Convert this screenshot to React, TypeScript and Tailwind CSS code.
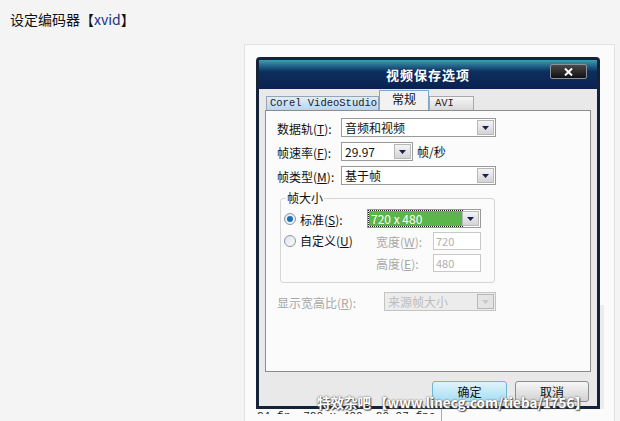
import React from 'react';

const cjk = {fontFamily: '"Noto Sans CJK SC", "Liberation Sans", sans-serif'};
const mono = {fontFamily: '"Liberation Mono", monospace'};

function Arrow({disabled}: {disabled?: boolean}) {
  return (
    <div
      className={`flex h-full w-[17px] items-center justify-center border border-[#b8b8b8] ${
        disabled ? 'bg-[#e4e4e4]' : 'bg-gradient-to-b from-[#f4f4f4] to-[#d4d4d4]'
      }`}
    >
      <svg width="7" height="4" viewBox="0 0 7 4">
        <path d="M0 0h7L3.5 4z" fill={disabled ? '#c8c8c8' : '#15205a'} />
      </svg>
    </div>
  );
}

function Select({
  value,
  width,
  highlight,
  disabled,
}: {
  value: string;
  width: string;
  highlight?: boolean;
  disabled?: boolean;
}) {
  return (
    <div
      className={`flex h-[19px] items-stretch border p-px ${width} ${
        disabled ? 'border-[#c4c4c4] bg-[#ececec]' : 'border-[#9a9a9a] bg-white'
      }`}
    >
      <div
        className={`flex flex-1 items-center pl-[2px] text-[12px] leading-none ${
          highlight ? 'bg-[#5ab54a] text-white outline-1 outline-dotted outline-[#1a1a1a]' : ''
        } ${disabled ? 'text-[#bdbdbd]' : highlight ? '' : 'text-[#111]'}`}
      >
        {value}
      </div>
      <Arrow disabled={disabled} />
    </div>
  );
}

function Label({text, k, gray}: {text: string; k: string; gray?: boolean}) {
  return (
    <span className={`text-[12px] leading-[14px] ${gray ? 'text-[#a8a8a8]' : 'text-[#111]'}`}>
      {text}(<span className="underline">{k}</span>):
    </span>
  );
}

function Radio({checked}: {checked?: boolean}) {
  return (
    <div className="flex h-[12px] w-[12px] shrink-0 items-center justify-center rounded-full border border-[#8a96a6] bg-gradient-to-br from-[#dfe4ea] to-[#fafafa]">
      {checked && <div className="h-[6px] w-[6px] rounded-full bg-[#1f6fb8]" />}
    </div>
  );
}

export default function App() {
  return (
    <div className="h-[421px] w-[620px] overflow-hidden bg-[#f4f4f4]" style={cjk}>
      <div className="pl-[10px] pt-[9px] text-[14px] leading-[20px] text-[#111]">
        设定编码器【<span className="text-[#1c2f86]">xvid</span>】
      </div>

      <div className="ml-[244px] mt-[15px] h-[400px] w-[371px] border border-[#e2e2e2] bg-[#fbfbfb] pl-[11px] pt-[12px]">
        <div className="flex">
          {/* dialog */}
          <div className="flex h-[352px] w-[344px] flex-col rounded-t-[4px] border-[3px] border-[#152338] bg-[#e9e9e9]">
            {/* title bar */}
            <div className="relative flex h-[29px] items-center justify-center bg-gradient-to-b from-[#3e9fb6] via-[#0e2f5e] via-40% to-[#0a2150]">
              <span className="text-[13px] font-bold tracking-[1px] text-white">视频保存选项</span>
              <div className="absolute right-[10px] top-[4px] flex h-[15px] w-[37px] items-center justify-center rounded-[2px] border border-[#8a9098] bg-gradient-to-b from-[#4a4a4a] to-[#111]">
                <svg width="9" height="8" viewBox="0 0 9 8">
                  <path d="M1 0.5L8 7.5M8 0.5L1 7.5" stroke="#fff" strokeWidth="2" />
                </svg>
              </div>
            </div>

            {/* body */}
            <div className="flex flex-1 flex-col px-[6px] pt-[1px]">
              {/* tabs */}
              <div className="flex h-[20px] items-end pl-[1px]">
                <div
                  className="flex h-[14px] w-[113px] items-center whitespace-nowrap border border-b-0 border-[#9aa4ae] bg-gradient-to-b from-[#dfeefa] to-[#b9d6ef] pl-[3px] text-[10.5px] leading-none text-[#222]"
                  style={mono}
                >
                  Corel VideoStudio
                </div>
                <div className="flex h-[20px] w-[50px] items-start justify-center border border-b-0 border-[#7fa6c6] bg-[#f2f2f2] pt-[1px] text-[12px] leading-[14px] text-[#111]">
                  常规
                </div>
                <div
                  className="flex h-[14px] w-[45px] items-center border border-b-0 border-[#a8a8a8] bg-gradient-to-b from-[#f6f6f6] to-[#d9d9d9] pl-[5px] text-[10.5px] leading-none text-[#222]"
                  style={mono}
                >
                  AVI
                </div>
              </div>

              {/* tab panel */}
              <div className="flex h-[262px] w-[326px] flex-col border border-[#8c8c8c] bg-[#fbfbfb] pl-[11px] pt-[7px] leading-[14px]">
                <div className="flex items-center gap-[1px]">
                  <div className="w-[63px]">
                    <Label text="数据轨" k="T" />
                  </div>
                  <Select value="音频和视频" width="w-[155px]" />
                </div>
                <div className="mt-[5px] flex items-center gap-[1px]">
                  <div className="w-[63px]">
                    <Label text="帧速率" k="F" />
                  </div>
                  <Select value="29.97" width="w-[72px]" />
                  <span className="ml-[3px] text-[12px] text-[#111]">帧/秒</span>
                </div>
                <div className="mt-[5px] flex items-center gap-[1px]">
                  <div className="w-[63px]">
                    <Label text="帧类型" k="M" />
                  </div>
                  <Select value="基于帧" width="w-[155px]" />
                </div>

                {/* group box */}
                <div className="relative ml-[3px] mt-[13px] h-[85px] w-[215px] rounded-[3px] border border-[#d6d6d6]">
                  <span className="absolute -top-[9px] left-[5px] bg-[#fbfbfb] px-[1px] text-[12px] leading-[16px] text-[#111]">
                    帧大小
                  </span>
                  <div className="flex items-center pl-[3px] pt-[10px]">
                    <Radio checked />
                    <span className="ml-[4px] w-[67px]">
                      <Label text="标准" k="S" />
                    </span>
                    <Select value="720 x 480" width="w-[114px]" highlight />
                  </div>
                  <div className="flex items-center pl-[3px] pt-[4px]">
                    <Radio />
                    <span className="ml-[4px] w-[76px] text-[12px] leading-[14px] text-[#111]">
                      自定义(<span className="underline">U</span>)
                    </span>
                    <span className="w-[57px]">
                      <Label text="宽度" k="W" gray />
                    </span>
                    <div className="flex h-[18px] w-[48px] items-center border border-[#c8c8c8] bg-white pl-[2px] text-[11px] text-[#b0b0b0]">
                      720
                    </div>
                  </div>
                  <div className="flex items-center pl-[95px] pt-[4px]">
                    <span className="w-[57px]">
                      <Label text="高度" k="E" gray />
                    </span>
                    <div className="flex h-[18px] w-[48px] items-center border border-[#c8c8c8] bg-white pl-[2px] text-[11px] text-[#b0b0b0]">
                      480
                    </div>
                  </div>
                </div>

                <div className="mt-[9px] flex items-center">
                  <div className="w-[107px]">
                    <Label text="显示宽高比" k="R" gray />
                  </div>
                  <Select value="来源帧大小" width="w-[112px]" disabled />
                </div>
              </div>

              {/* buttons */}
              <div className="relative mt-[9px] flex justify-end gap-[8px] pr-[2px]">
                <div className="flex h-[21px] w-[75px] items-center justify-center rounded-[3px] border border-[#6fb6d6] bg-gradient-to-b from-[#dff4fc] to-[#a8def4] text-[12px] text-[#111]">
                  确定
                </div>
                <div className="flex h-[21px] w-[74px] items-center justify-center rounded-[3px] border border-[#8e8e8e] bg-gradient-to-b from-[#f7f7f7] to-[#d2d2d2] text-[12px] text-[#111]">
                  取消
                </div>
                <div
                  className="absolute left-[52px] top-[15px] whitespace-nowrap text-[13.5px] font-bold leading-none text-white"
                  style={{textShadow: '0 0 2px #444, 1px 1px 1px #555'}}
                >
                  特效杂吧 【www.linecg.com/tieba/1756】
                </div>
              </div>
            </div>
          </div>
          {/* right strip of the background screen */}
          <div className="mt-[248px] h-[104px] w-[4px] bg-[#ececec]" />
        </div>
        <div className="flex h-[12px] text-[11px] leading-[14px] text-[#222]" style={mono}>
          <span className="h-[5px] w-[185px] overflow-hidden pl-[1px]">24 fr. 720 x 480. 29.97 fps</span>
          <span className="h-full border-l border-[#aaa]" />
        </div>
      </div>
    </div>
  );
}
